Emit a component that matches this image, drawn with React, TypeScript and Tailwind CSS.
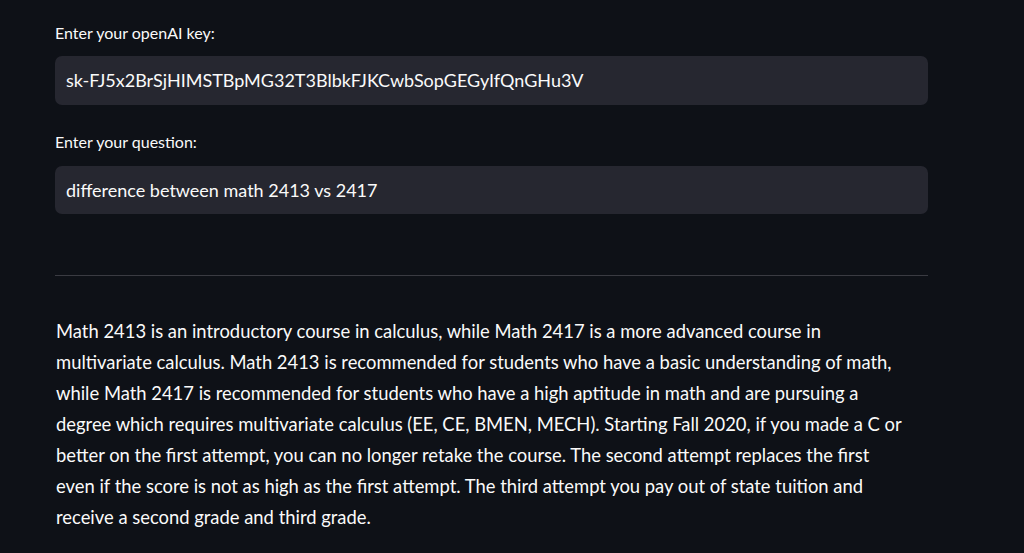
const answer = [
  "Math 2413 is an introductory course in calculus, while Math 2417 is a more advanced course in",
  "multivariate calculus. Math 2413 is recommended for students who have a basic understanding of math,",
  "while Math 2417 is recommended for students who have a high aptitude in math and are pursuing a",
  "degree which requires multivariate calculus (EE, CE, BMEN, MECH). Starting Fall 2020, if you made a C or",
  "better on the first attempt, you can no longer retake the course. The second attempt replaces the first",
  "even if the score is not as high as the first attempt. The third attempt you pay out of state tuition and",
  "receive a second grade and third grade.",
]

export default function App() {
  return (
    <div
      className="min-h-[553px] w-full bg-[#0e1117] text-[#fafafa]"
      style={{ fontFamily: '"Lato", "Noto Sans", sans-serif' }}
    >
      <div className="ml-[55px] w-[873px] pt-[23px]">
        <div className="mb-[13px] text-[16px] leading-[20px]">Enter your openAI key:</div>
        <div className="flex h-[49px] items-center rounded-[7px] bg-[#262730] px-[11px] text-[18px]">
          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
        </div>
        <div className="mb-[14px] mt-[27px] text-[16px] leading-[20px]">Enter your question:</div>
        <div className="flex h-[48px] items-center rounded-[7px] bg-[#262730] px-[11px] text-[18px]">
          difference between math 2413 vs 2417
        </div>
        <div className="mt-[61px] h-px bg-[#3a3b42]" />
        <p className="mt-[40px] whitespace-nowrap pl-px text-[18.4px] leading-[31px]">
          {answer.map((line, i) => (
            <span key={i} className="block">
              {line}
            </span>
          ))}
        </p>
      </div>
    </div>
  )
}
